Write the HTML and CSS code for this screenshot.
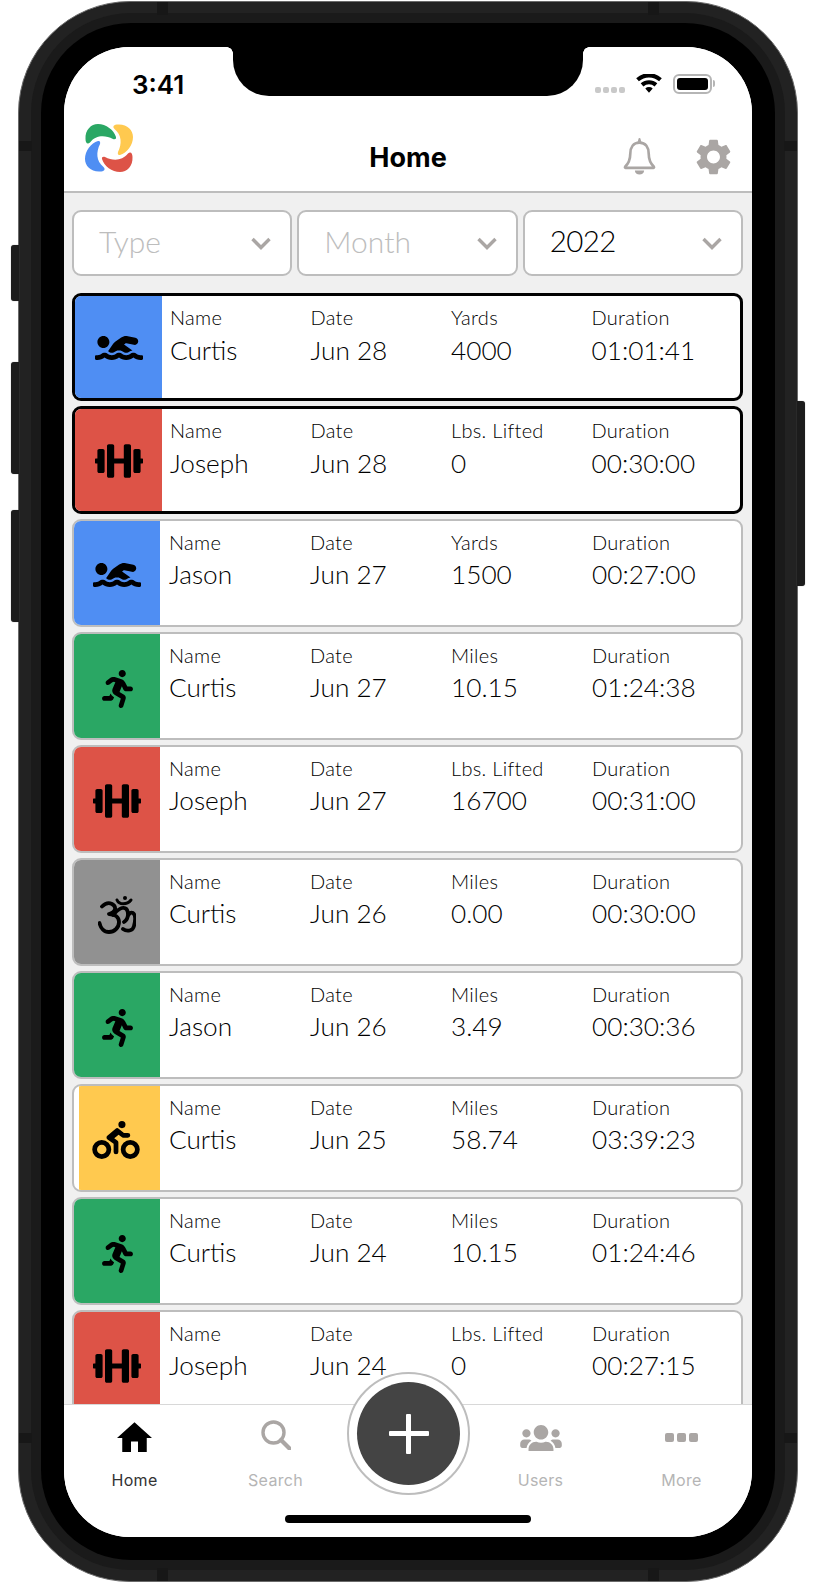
FILE: index.html
```html
<!DOCTYPE html>
<html lang="en">
<head>
<meta charset="utf-8">
<title>Home</title>
<link rel="stylesheet" href="styles.css">
</head>
<body>
<svg class="defs" width="0" height="0" aria-hidden="true">
  <symbol id="i-swim" viewBox="0 96 640 320"><path d="M189.61 310.58c3.54 3.26 15.27 9.42 34.39 9.42s30.86-6.16 34.39-9.42c16.02-14.77 34.5-22.58 53.46-22.58h16.3c18.96 0 37.45 7.81 53.46 22.58 3.54 3.26 15.27 9.42 34.39 9.42s30.86-6.16 34.39-9.42c14.86-13.71 31.88-21.12 49.39-22.16l-112.84-80.6 18-12.86c3.64-2.58 8.28-3.52 12.62-2.61l100.35 21.53c25.91 5.53 51.44-10.97 57-36.88 5.55-25.92-10.95-51.44-36.88-57L437.68 98.47c-30.73-6.58-63.02.12-88.56 18.38l-80.02 57.17c-10.38 7.39-19.37 16.44-26.72 26.93L173.75 300.1c5.47 2.88 10.78 6.26 15.86 10.48zM624 352h-16c-26.04 0-45.8-8.42-56.09-17.9-8.9-8.21-19.66-14.1-31.77-14.1h-16.3c-12.11 0-22.87 5.89-31.77 14.1C461.8 343.58 442.04 352 416 352s-45.8-8.42-56.09-17.9c-8.9-8.21-19.66-14.1-31.77-14.1h-16.3c-12.11 0-22.87 5.89-31.77 14.1C269.8 343.58 250.04 352 224 352s-45.8-8.42-56.09-17.9c-8.9-8.21-19.66-14.1-31.77-14.1h-16.3c-12.11 0-22.87 5.89-31.77 14.1C77.8 343.58 58.04 352 32 352H16c-8.84 0-16 7.16-16 16v32c0 8.84 7.16 16 16 16h16c38.62 0 72.72-12.19 96-31.84 23.28 19.66 57.38 31.84 96 31.84s72.72-12.19 96-31.84c23.28 19.66 57.38 31.84 96 31.84s72.72-12.19 96-31.84c23.28 19.66 57.38 31.84 96 31.84h16c8.84 0 16-7.16 16-16v-32c0-8.84-7.16-16-16-16zm-512-96c44.18 0 80-35.82 80-80s-35.82-80-80-80-80 35.82-80 80 35.82 80 80 80z"/></symbol>
  <symbol id="i-lift" viewBox="0 32 640 448"><path d="M104 96H56c-13.3 0-24 10.7-24 24v104H8c-4.4 0-8 3.6-8 8v48c0 4.4 3.6 8 8 8h24v104c0 13.3 10.7 24 24 24h48c13.3 0 24-10.7 24-24V120c0-13.3-10.7-24-24-24zm528 128h-24V120c0-13.3-10.7-24-24-24h-48c-13.3 0-24 10.7-24 24v272c0 13.3 10.7 24 24 24h48c13.3 0 24-10.7 24-24V288h24c4.4 0 8-3.6 8-8v-48c0-4.4-3.6-8-8-8zM456 32h-48c-13.3 0-24 10.7-24 24v168H256V56c0-13.3-10.7-24-24-24h-48c-13.3 0-24 10.7-24 24v400c0 13.3 10.7 24 24 24h48c13.3 0 24-10.7 24-24V288h128v168c0 13.3 10.7 24 24 24h48c13.3 0 24-10.7 24-24V56c0-13.3-10.7-24-24-24z"/></symbol>
  <symbol id="i-run" viewBox="0 0 416 512"><path d="M272 96c26.51 0 48-21.49 48-48S298.51 0 272 0s-48 21.49-48 48 21.49 48 48 48zM113.69 317.47l-14.8 34.52H32c-17.67 0-32 14.33-32 32s14.33 32 32 32h77.45c19.25 0 36.58-11.44 44.11-29.09l8.79-20.52-10.67-6.3c-17.32-10.23-30.06-25.37-37.99-42.61zM384 223.99h-44.03l-26.06-53.25c-12.5-25.55-35.45-44.23-61.78-50.94l-71.08-21.14c-28.3-6.8-57.77-.55-80.84 17.14l-39.67 30.41c-14.03 10.75-16.69 30.83-5.92 44.86s30.84 16.66 44.86 5.92l39.69-30.41c7.67-5.89 17.44-8 25.27-6.14l14.7 4.37-37.46 87.39c-12.62 29.48-1.31 64.01 26.3 80.31l84.98 50.17-27.47 87.73c-5.28 16.86 4.11 34.81 20.97 40.09 3.19 1 6.41 1.48 9.58 1.48 13.61 0 26.23-8.77 30.52-22.45l31.64-101.06c5.91-20.77-2.89-43.08-21.64-54.39l-61.24-36.14 31.31-78.28 20.27 41.43c8 16.34 24.92 26.89 43.11 26.89H384c17.67 0 32-14.33 32-32s-14.33-31.99-32-31.99z"/></symbol>
  <symbol id="i-bike" viewBox="0 0 640 512"><path d="M400 96a48 48 0 1 0-48-48 48 48 0 0 0 48 48zm-4 121a31.9 31.9 0 0 0 20 7h64a32 32 0 0 0 0-64h-52.78L356 103a31.94 31.94 0 0 0-40.81.68l-112 96a32 32 0 0 0 3.08 50.92L288 305.12V416a32 32 0 0 0 64 0V288a32 32 0 0 0-14.25-26.62l-41.36-27.57 58.25-49.92zm116 39a128 128 0 1 0 128 128 128 128 0 0 0-128-128zm0 192a64 64 0 1 1 64-64 64 64 0 0 1-64 64zM128 256a128 128 0 1 0 128 128 128 128 0 0 0-128-128zm0 192a64 64 0 1 1 64-64 64 64 0 0 1-64 64z"/></symbol>
  <symbol id="i-om" viewBox="0 0 38 38"><g fill="none" stroke="#000" stroke-width="3.800" stroke-linecap="round" stroke-linejoin="round"><path d="M4 10.500C7 7.500 11 6.500 14 8c4.500 2.500 4.500 8-3 10 6 0 10 3 10 8 0 6-5 10-10 10-5 0-8.500-4-9.500-9"/><path d="M15 19c3-3 5-6 9-7 4-1 6 2 6 6 0 3-1 6-4 8M30 20c1-3 3-4 5-3 3 2 2 9 1 13-1 5-7 6-11 3"/></g><path d="M19 4c2 5 10 5 14 0" fill="none" stroke="#000" stroke-width="3" stroke-linecap="round"/><circle cx="27" cy="2" r="2"/></symbol>
  <symbol id="i-chev" viewBox="0 0 20 13"><path d="M1.500 2l8.500 8.500L18.500 2" fill="none" stroke="#aaa6a4" stroke-width="3.400"/></symbol>
</svg>

<div class="device">
  <i class="btn btn-a"></i><i class="btn btn-b"></i><i class="btn btn-c"></i><i class="btn btn-d"></i>
  <i class="band band-t1"></i><i class="band band-t2"></i><i class="band band-b1"></i><i class="band band-b2"></i>
  <i class="band band-l1"></i><i class="band band-l2"></i><i class="band band-r1"></i><i class="band band-r2"></i>
  <div class="ring">
    <div class="bezel">
      <div class="screen">
        <div class="notch"></div>
        <header class="top">
          <div class="status">
            <span class="time">3:41</span>
            <div class="status-icons">
              <span class="signal"><i></i><i></i><i></i><i></i></span>
              <svg class="wifi" viewBox="0 0 26 19"><path d="M13 18.800l-3.700-4.300a5.500 5.500 0 0 1 7.400 0zM7.400 12.400L4.700 9.300a12.500 12.500 0 0 1 16.600 0l-2.700 3.100a8.500 8.500 0 0 0-11.200 0zM2.900 7.300L.2 4.200a19 19 0 0 1 25.600 0l-2.700 3.100a15 15 0 0 0-20.200 0z"/></svg>
              <span class="battery"><b></b></span>
            </div>
          </div>
          <div class="nav">
            <svg class="logo" viewBox="0 0 50 50">
              <path class="p-green" d="M1.500 16C1 7 7 1 14 1c8 0 16 6 18 13 .5 2-1 2.500-3 2-8-4-17-4-23 3.500C3.500 22 1.500 20 1.500 16z"/>
              <path class="p-yellow" d="M1.500 16C1 7 7 1 14 1c8 0 16 6 18 13 .5 2-1 2.500-3 2-8-4-17-4-23 3.500C3.500 22 1.500 20 1.500 16z" transform="rotate(90 25 25)"/>
              <path class="p-red" d="M1.500 16C1 7 7 1 14 1c8 0 16 6 18 13 .5 2-1 2.500-3 2-8-4-17-4-23 3.500C3.500 22 1.500 20 1.500 16z" transform="rotate(180 25 25)"/>
              <path class="p-blue" d="M1.500 16C1 7 7 1 14 1c8 0 16 6 18 13 .5 2-1 2.500-3 2-8-4-17-4-23 3.500C3.500 22 1.500 20 1.500 16z" transform="rotate(270 25 25)"/>
            </svg>
            <h1 class="title">Home</h1>
            <div class="nav-icons">
              <svg class="bell" viewBox="0 0 32 37"><path d="M16 5.500C10 5.500 7 10 7 16.500c0 6-1.500 9-5 12.500a.6.6 0 0 0 .4 1h27.200a.6.6 0 0 0 .4-1c-3.500-3.500-5-6.500-5-12.500C25 10 22 5.500 16 5.500z" fill="none" stroke="#aaa6a4" stroke-width="2.600" stroke-linejoin="round"/><path d="M14 5.500l1-3.500a1 1 0 0 1 2 0l1 3.500zM11.500 32.500h9c0 2.500-2 4-4.500 4s-4.500-1.500-4.500-4z" fill="#aaa6a4"/></svg>
              <svg class="gear" viewBox="2.300 2 19.400 20"><path d="M19.140 12.940c.04-.3.06-.61.06-.94 0-.32-.02-.64-.07-.94l2.030-1.580c.18-.14.23-.41.12-.61l-1.920-3.320c-.12-.22-.37-.29-.59-.22l-2.390.96c-.5-.38-1.030-.7-1.620-.94l-.36-2.540c-.04-.24-.24-.41-.48-.41h-3.840c-.24 0-.43.17-.47.41l-.36 2.540c-.59.24-1.130.57-1.620.94l-2.390-.96c-.22-.08-.47 0-.59.22L2.740 8.870c-.12.21-.08.47.12.61l2.030 1.580c-.05.3-.09.63-.09.94s.02.64.07.94l-2.030 1.580c-.18.14-.23.41-.12.61l1.920 3.320c.12.22.37.29.59.22l2.390-.96c.5.38 1.030.7 1.620.94l.36 2.540c.05.24.24.41.48.41h3.840c.24 0 .44-.17.47-.41l.36-2.540c.59-.24 1.130-.56 1.620-.94l2.390.96c.22.08.47 0 .59-.22l1.920-3.320c.12-.22.07-.47-.12-.61l-2.010-1.580zM12 15.600c-1.980 0-3.600-1.620-3.600-3.600s1.620-3.600 3.600-3.600 3.600 1.620 3.600 3.600-1.620 3.600-3.600 3.600z" fill="#aaa6a4"/></svg>
            </div>
          </div>
        </header>

        <main class="main">
          <div class="filters">
            <div class="filter is-empty"><span>Type</span><svg class="chev"><use href="#i-chev"/></svg></div>
            <div class="filter is-empty"><span>Month</span><svg class="chev"><use href="#i-chev"/></svg></div>
            <div class="filter has-value"><span>2022</span><svg class="chev"><use href="#i-chev"/></svg></div>
          </div>
          <div class="list">
            <article class="card is-selected">
              <div class="side swim"><svg class="ic-swim"><use href="#i-swim"/></svg></div>
              <div class="cols">
                <div><p class="k">Name</p><p class="v">Curtis</p></div>
                <div><p class="k">Date</p><p class="v">Jun 28</p></div>
                <div><p class="k">Yards</p><p class="v">4000</p></div>
                <div><p class="k">Duration</p><p class="v">01:01:41</p></div>
              </div>
            </article>
            <article class="card is-selected">
              <div class="side lift"><svg class="ic-lift"><use href="#i-lift"/></svg></div>
              <div class="cols">
                <div><p class="k">Name</p><p class="v">Joseph</p></div>
                <div><p class="k">Date</p><p class="v">Jun 28</p></div>
                <div><p class="k">Lbs. Lifted</p><p class="v">0</p></div>
                <div><p class="k">Duration</p><p class="v">00:30:00</p></div>
              </div>
            </article>
            <article class="card">
              <div class="side swim"><svg class="ic-swim"><use href="#i-swim"/></svg></div>
              <div class="cols">
                <div><p class="k">Name</p><p class="v">Jason</p></div>
                <div><p class="k">Date</p><p class="v">Jun 27</p></div>
                <div><p class="k">Yards</p><p class="v">1500</p></div>
                <div><p class="k">Duration</p><p class="v">00:27:00</p></div>
              </div>
            </article>
            <article class="card">
              <div class="side run"><svg class="ic-run"><use href="#i-run"/></svg></div>
              <div class="cols">
                <div><p class="k">Name</p><p class="v">Curtis</p></div>
                <div><p class="k">Date</p><p class="v">Jun 27</p></div>
                <div><p class="k">Miles</p><p class="v">10.15</p></div>
                <div><p class="k">Duration</p><p class="v">01:24:38</p></div>
              </div>
            </article>
            <article class="card">
              <div class="side lift"><svg class="ic-lift"><use href="#i-lift"/></svg></div>
              <div class="cols">
                <div><p class="k">Name</p><p class="v">Joseph</p></div>
                <div><p class="k">Date</p><p class="v">Jun 27</p></div>
                <div><p class="k">Lbs. Lifted</p><p class="v">16700</p></div>
                <div><p class="k">Duration</p><p class="v">00:31:00</p></div>
              </div>
            </article>
            <article class="card">
              <div class="side yoga"><svg class="ic-om"><use href="#i-om"/></svg></div>
              <div class="cols">
                <div><p class="k">Name</p><p class="v">Curtis</p></div>
                <div><p class="k">Date</p><p class="v">Jun 26</p></div>
                <div><p class="k">Miles</p><p class="v">0.00</p></div>
                <div><p class="k">Duration</p><p class="v">00:30:00</p></div>
              </div>
            </article>
            <article class="card">
              <div class="side run"><svg class="ic-run"><use href="#i-run"/></svg></div>
              <div class="cols">
                <div><p class="k">Name</p><p class="v">Jason</p></div>
                <div><p class="k">Date</p><p class="v">Jun 26</p></div>
                <div><p class="k">Miles</p><p class="v">3.49</p></div>
                <div><p class="k">Duration</p><p class="v">00:30:36</p></div>
              </div>
            </article>
            <article class="card">
              <div class="side bike"><svg class="ic-bike"><use href="#i-bike"/></svg></div>
              <div class="cols">
                <div><p class="k">Name</p><p class="v">Curtis</p></div>
                <div><p class="k">Date</p><p class="v">Jun 25</p></div>
                <div><p class="k">Miles</p><p class="v">58.74</p></div>
                <div><p class="k">Duration</p><p class="v">03:39:23</p></div>
              </div>
            </article>
            <article class="card">
              <div class="side run"><svg class="ic-run"><use href="#i-run"/></svg></div>
              <div class="cols">
                <div><p class="k">Name</p><p class="v">Curtis</p></div>
                <div><p class="k">Date</p><p class="v">Jun 24</p></div>
                <div><p class="k">Miles</p><p class="v">10.15</p></div>
                <div><p class="k">Duration</p><p class="v">01:24:46</p></div>
              </div>
            </article>
            <article class="card">
              <div class="side lift"><svg class="ic-lift"><use href="#i-lift"/></svg></div>
              <div class="cols">
                <div><p class="k">Name</p><p class="v">Joseph</p></div>
                <div><p class="k">Date</p><p class="v">Jun 24</p></div>
                <div><p class="k">Lbs. Lifted</p><p class="v">0</p></div>
                <div><p class="k">Duration</p><p class="v">00:27:15</p></div>
              </div>
            </article>
          </div>
        </main>

        <nav class="tabs">
          <div class="tab is-active">
            <span class="tab-icon"><svg class="ic-home" viewBox="2 3 20 17"><path d="M10 20v-6h4v6h5v-8h3L12 3 2 12h3v8z"/></svg></span>
            <span class="tab-label">Home</span>
          </div>
          <div class="tab">
            <span class="tab-icon"><svg class="ic-search" viewBox="0 0 30 30"><circle cx="12.500" cy="12.500" r="10.500" fill="none" stroke="#aaa6a4" stroke-width="3.400"/><path d="M20 20l8.500 8.500" stroke="#aaa6a4" stroke-width="4.200" stroke-linecap="round"/></svg></span>
            <span class="tab-label">Search</span>
          </div>
          <div class="tab-gap"></div>
          <div class="tab">
            <span class="tab-icon"><svg class="ic-users" viewBox="0 32 640 400"><path d="M96 224c35.300 0 64-28.700 64-64s-28.700-64-64-64-64 28.700-64 64 28.700 64 64 64zm448 0c35.300 0 64-28.700 64-64s-28.700-64-64-64-64 28.700-64 64 28.700 64 64 64zm32 32h-64c-17.600 0-33.500 7.100-45.100 18.600 40.300 22.100 68.900 62 75.100 109.400h66c17.700 0 32-14.300 32-32v-32c0-35.300-28.700-64-64-64zm-256 0c61.900 0 112-50.100 112-112S381.900 32 320 32 208 82.100 208 144s50.100 112 112 112zm76.800 32h-8.300c-20.800 10-43.900 16-68.500 16s-47.600-6-68.500-16h-8.300C179.600 288 128 339.600 128 403.200V432c0 26.500 21.500 48 48 48h288c26.500 0 48-21.500 48-48v-28.800c0-63.600-51.600-115.200-115.200-115.200zm-223.700-13.400C161.500 263.100 145.600 256 128 256H64c-35.300 0-64 28.700-64 64v32c0 17.700 14.300 32 32 32h65.900c6.300-47.400 34.900-87.300 75.200-109.400z" fill="#aaa6a4"/></svg></span>
            <span class="tab-label">Users</span>
          </div>
          <div class="tab">
            <span class="tab-icon"><span class="dots"><i></i><i></i><i></i></span></span>
            <span class="tab-label">More</span>
          </div>
        </nav>
        <div class="fab"><span class="fab-inner"><i class="plus-h"></i><i class="plus-v"></i></span></div>
        <div class="home-bar"></div>
      </div>
    </div>
  </div>
</div>
</body>
</html>
```

FILE: styles.css
```css
* { box-sizing: border-box; }
html, body { margin: 0; padding: 0; background: #fff; }
body { width: 816px; height: 1586px; overflow: hidden; font-family: "Lato", "Liberation Sans", sans-serif; }
.defs { position: absolute; }
p, h1 { margin: 0; }
i { display: block; font-style: normal; }

/* Device frame */
.device { position: relative; width: 780px; height: 1581px; margin: 1px 0 0 18px; background: #222; border: 1px solid #6a6a6a; border-radius: 112px; padding: 11px 12px; }
.ring { height: 100%; background: #1a1a1a; border-radius: 100px; padding: 10px; }
.bezel { height: 100%; background: #000; border-radius: 90px; padding: 24px 23px 23px; }
.screen { position: relative; display: flex; flex-direction: column; height: 100%; background: #fff; border-radius: 66px; overflow: hidden; }

.btn { position: absolute; width: 8px; background: #1c1c1c; border-radius: 3px 0 0 3px; box-shadow: 0 0 1px #777; }
.btn-a { left: -8px; top: 243px; height: 56px; }
.btn-b { left: -8px; top: 360px; height: 112px; }
.btn-c { left: -8px; top: 508px; height: 112px; }
.btn-d { right: -8px; top: 399px; height: 185px; border-radius: 0 3px 3px 0; }

.band { position: absolute; background: #171717; }
.band-t1, .band-t2, .band-b1, .band-b2 { width: 11px; height: 13px; }
.band-t1 { left: 138px; top: 0; }
.band-t2 { right: 138px; top: 0; }
.band-b1 { left: 138px; bottom: 0; }
.band-b2 { right: 138px; bottom: 0; }
.band-l1, .band-l2, .band-r1, .band-r2 { width: 13px; height: 10px; }
.band-l1 { left: 0; top: 139px; }
.band-l2 { left: 0; bottom: 138px; }
.band-r1 { right: 0; top: 139px; }
.band-r2 { right: 0; bottom: 138px; }

.notch { position: absolute; z-index: 3; left: 169px; top: 0; width: 350px; height: 49px; background: #000; border-radius: 0 0 36px 36px; }
.notch::before, .notch::after { content: ""; position: absolute; top: 0; width: 6px; height: 6px; }
.notch::before { left: -6px; background: radial-gradient(circle at 0 100%, transparent 5.500px, #000 6px); }
.notch::after { right: -6px; background: radial-gradient(circle at 100% 100%, transparent 5.500px, #000 6px); }

/* Header */
.top { flex: none; height: 146px; background: #fff; border-bottom: 2px solid #bdbdbd; }
.status { display: flex; justify-content: space-between; height: 66px; padding: 23px 40px 0 68px; }
.time { font: 600 26px/30px "Inter", sans-serif; color: #000; }
.status-icons { display: flex; gap: 11px; height: 20px; margin-top: 4px; align-items: flex-start; }
.signal { display: flex; gap: 2px; margin-top: 13px; }
.signal i { width: 6px; height: 6px; border-radius: 2px; background: #c9c9c9; }
.wifi { width: 26px; height: 19px; }
.battery { position: relative; display: block; width: 39px; height: 20px; border: 2px solid #b5b5b5; border-radius: 6px; padding: 2px; }
.battery b { display: block; height: 100%; background: #000; border-radius: 3px; }
.battery::after { content: ""; position: absolute; right: -5px; top: 4px; width: 2px; height: 7px; background: #b5b5b5; border-radius: 0 2px 2px 0; }
.nav { position: relative; display: flex; align-items: flex-start; justify-content: space-between; padding: 10px 21px 0 20px; }
.logo { width: 50px; height: 50px; }
.p-green { fill: #2aa764; }
.p-yellow { fill: #ffc94f; }
.p-red { fill: #dd5347; }
.p-blue { fill: #4f8ef3; }
.title { position: absolute; left: 0; right: 0; top: 28px; text-align: center; font: 700 27px/34px "Inter", sans-serif; color: #000; }
.nav-icons { display: flex; gap: 40px; margin-top: 14px; }
.bell { width: 33px; height: 38px; }
.gear { width: 35px; height: 36px; margin-top: 2px; }

/* Main */
.main { flex: 1; min-height: 0; overflow: hidden; background: #f0f0f0; padding: 17px 9px 0 8px; }
.filters { display: flex; gap: 5px; margin-bottom: 17px; }
.filter { flex: 1; display: flex; align-items: center; justify-content: space-between; height: 66px; padding: 0 19px 5px 25px; background: #fff; border: 2px solid #bdbdbd; border-radius: 9px; font-size: 30px; font-weight: 300; color: #111; }
.filter.is-empty { color: #bdbdbd; }
.filter.has-value { color: #000; font-size: 29.5px; letter-spacing: -.6px; }
.chev { width: 20px; height: 13px; margin-top: 5px; }

.list { display: flex; flex-direction: column; gap: 5px; }
.card { flex: none; display: flex; height: 108px; background: #fff; border: 2px solid #bdbdbd; border-radius: 9px; overflow: hidden; }
.card.is-selected { border: 3px solid #000; }
.side { flex: none; display: flex; align-items: center; justify-content: center; width: 86px; padding-top: 3px; }
.is-selected .side { width: 87px; padding-top: 1px; }
.swim { background: #4f8ef3; }
.lift { background: #dd5347; }
.run { background: #2aa764; }
.yoga { background: #919191; }
.bike { background: #ffc94f; margin-left: 5px; width: 81px; }
.ic-swim { width: 48px; height: 24px; }
.ic-lift { width: 48px; height: 34px; }
.ic-run { width: 31px; height: 38px; margin-top: 3px; }
.ic-om { width: 38px; height: 38px; margin-top: 2px; }
.ic-bike { width: 48px; height: 38px; }
.bike .ic-bike { margin-left: -7px; }

.cols { flex: 1; min-width: 0; display: grid; grid-template-columns: repeat(4, 1fr); padding: 8px 8px 0 9px; color: #111; }
.is-selected .cols { padding-left: 8px; }
.k { font-size: 20px; line-height: 26px; font-weight: 300; letter-spacing: .3px; color: #000; }
.v { font-size: 26.2px; line-height: 36px; margin-top: 1px; font-weight: 300; color: #000; }
.is-selected .v { margin-top: 2px; }

/* Tabs */
.tabs { position: relative; z-index: 1; flex: none; display: grid; grid-template-columns: 141px 141px 124px 141px 141px; height: 133px; background: #fff; border-top: 1px solid #d8d8d8; }
.tab { display: flex; flex-direction: column; align-items: center; padding-top: 14px; }
.tab:first-child { padding-top: 16px; }
.tab-icon { display: flex; align-items: center; justify-content: center; height: 31px; }
.tab-label { margin-top: 19px; font: 400 16px/22px "Inter", sans-serif; letter-spacing: .3px; color: #b5b5b5; }
.tab:first-child .tab-label { margin-top: 17px; }
.is-active .tab-label { color: #333; }
.ic-home { width: 35px; height: 30px; }
.ic-search { width: 30px; height: 30px; }
.ic-users { width: 42px; height: 26px; margin-top: 6px; }
.dots { display: flex; gap: 3px; margin-top: 6px; }
.dots i { width: 9px; height: 9px; border-radius: 2px; background: #aaa6a4; }

.fab { position: absolute; z-index: 2; left: 283px; bottom: 42px; width: 123px; height: 123px; padding: 8px; background: #fff; border: 2px solid #bdbdbd; border-radius: 50%; }
.fab-inner { position: relative; display: block; width: 100%; height: 100%; background: #444; border-radius: 50%; }
.plus-h, .plus-v { position: absolute; background: #fff; border-radius: 1px; }
.plus-h { left: calc(50% - 20px); top: calc(50% - 2.5px); width: 40px; height: 5px; }
.plus-v { left: calc(50% - 2.5px); top: calc(50% - 20px); width: 5px; height: 40px; }
.home-bar { position: absolute; z-index: 2; left: 221px; bottom: 14px; width: 246px; height: 8px; background: #000; border-radius: 4px; }
```
